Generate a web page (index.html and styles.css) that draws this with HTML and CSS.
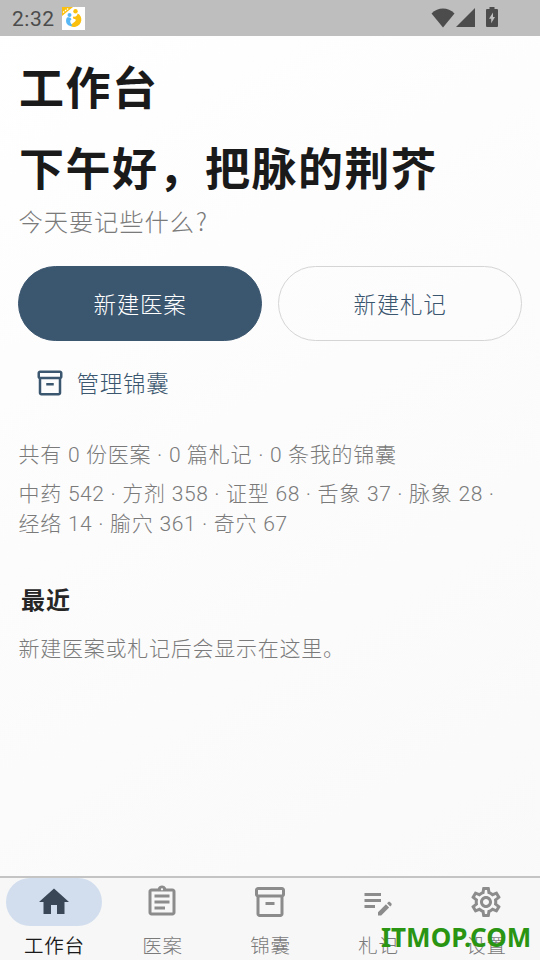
FILE: index.html
```
<!DOCTYPE html>
<html lang="zh-CN">
<head>
<meta charset="utf-8">
<title>工作台</title>
<link rel="stylesheet" href="styles.css">
</head>
<body>
<div class="app">
  <header class="status">
    <span class="clock">2:32</span>
    <svg class="app-badge" viewBox="0 0 23 23">
      <path fill="#fff" d="M0 0h23v23H0z"/>
      <path fill="#fbc00d" d="M0 0h11L0 9z"/>
      <path stroke="#fff" stroke-width="1.300" stroke-dasharray="1.5 1" d="M1 5.500L7 1"/>
      <circle cx="13.500" cy="4.200" r="2.200" fill="#fbc00d"/>
      <path fill="#fbc00d" d="M15.500 6.500c5.500 2 5.500 12-2.500 13.500-2 0-4-.5-5-1.500l5-4c1.500-1.500.5-3-1-2.500-1-.5-1.500-1.500-.5-2.500 2 .5 4-.5 4-3z"/>
      <circle cx="7.500" cy="8" r="2" fill="#58b8f5"/>
      <path fill="#58b8f5" d="M5 10.500c2-.5 4 0 4.500 2-2 .5-1.500 3.500 1 6-1.500 1-4 .5-5.500-1.500-1.300-2-1.300-4.500 0-6.500z"/>
    </svg>
    <div class="signals">
      <svg class="wifi" viewBox="0 0 24 20"><path d="M12 19.500.5 5.500C7-1.200 17-1.200 23.500 5.500z"/></svg>
      <svg class="cell" viewBox="0 0 19 19"><path d="M19 0v19H0z"/></svg>
      <svg class="battery" viewBox="0 0 12 20"><path fill-rule="evenodd" d="M3.500 0h5v2H11q1 0 1 1v16q0 1-1 1H1q-1 0-1-1V3q0-1 1-1h2.500zM7 5.500l-4 6.200h2.200v4.500L9 10H7z"/></svg>
    </div>
  </header>

  <main class="content">
    <h1 class="title">工作台</h1>
    <h2 class="greeting">下午好，把脉的荆芥</h2>
    <p class="prompt">今天要记些什么<span class="mark">?</span></p>
    <div class="actions">
      <button class="btn primary">新建医案</button>
      <button class="btn outline">新建札记</button>
    </div>
    <button class="manage">
      <svg viewBox="0 0 24 24"><path d="M20 2H4c-1 0-2 .9-2 2v3.010c0 .72.43 1.340 1 1.690V20c0 1.100 1.100 2 2 2h14c.9 0 2-.9 2-2V8.700c.57-.35 1-.97 1-1.690V4c0-1.100-1-2-2-2zm-1 18H5V9h14v11zm1-13H4V4h16v3zM9 12h6v2H9z"/></svg>
      <span>管理锦囊</span>
    </button>
    <p class="totals">共有 <b>0</b> 份医案 · <b>0</b> 篇札记 · <b>0</b> 条我的锦囊</p>
    <p class="library">中药 <b>542</b> · 方剂 <b>358</b> · 证型 <b>68</b> · 舌象 <b>37</b> · 脉象 <b>28</b> ·<br>经络 <b>14</b> · 腧穴 <b>361</b> · 奇穴 <b>67</b></p>
    <h3 class="recent">最近</h3>
    <p class="empty">新建医案或札记后会显示在这里。</p>
  </main>

  <nav class="tabs">
    <a class="tab active">
      <span class="pill"><svg viewBox="0 0 24 24"><path d="M10 20v-6h4v6h5v-8h3L12 3 2 12h3v8z"/></svg></span>
      <span class="label">工作台</span>
    </a>
    <a class="tab">
      <span class="pill"><svg viewBox="0 0 24 24"><path d="M7 15h7v2H7zm0-4h10v2H7zm0-4h10v2H7zm12-4h-4.180C14.400 1.840 13.300 1 12 1s-2.400.84-2.820 2H5c-1.100 0-2 .9-2 2v14c0 1.100.9 2 2 2h14c1.100 0 2-.9 2-2V5c0-1.100-.9-2-2-2zm-7-.25c.41 0 .75.34.75.75s-.34.75-.75.75-.75-.34-.75-.75.34-.75.75-.75zM19 19H5V5h14v14z"/></svg></span>
      <span class="label">医案</span>
    </a>
    <a class="tab">
      <span class="pill"><svg viewBox="0 0 24 24"><path d="M20 2H4c-1 0-2 .9-2 2v3.010c0 .72.43 1.340 1 1.690V20c0 1.100 1.100 2 2 2h14c.9 0 2-.9 2-2V8.700c.57-.35 1-.97 1-1.690V4c0-1.100-1-2-2-2zm-1 18H5V9h14v11zm1-13H4V4h16v3zM9 12h6v2H9z"/></svg></span>
      <span class="label">锦囊</span>
    </a>
    <a class="tab">
      <span class="pill"><svg viewBox="0 0 24 24"><path d="M3 10h11v2H3v-2zm0-2h11V6H3v2zm0 8h7v-2H3v2zm15.010-3.130.71-.71c.39-.39 1.020-.39 1.410 0l.71.71c.39.39.39 1.020 0 1.410l-.71.71-2.120-2.120zm-.71.71-5.300 5.300V21h2.120l5.300-5.300-2.120-2.120z"/></svg></span>
      <span class="label">札记</span>
    </a>
    <a class="tab">
      <span class="pill"><svg viewBox="0 0 24 24"><path d="M19.430 12.980c.04-.32.07-.64.07-.98 0-.34-.03-.66-.07-.98l2.110-1.650c.19-.15.24-.42.12-.64l-2-3.460c-.09-.16-.26-.25-.44-.25-.06 0-.12.01-.17.03l-2.490 1c-.52-.4-1.080-.73-1.690-.98l-.38-2.650C14.460 2.180 14.250 2 14 2h-4c-.25 0-.46.18-.49.42l-.38 2.650c-.61.25-1.170.59-1.690.98l-2.490-1c-.06-.02-.12-.03-.18-.03-.17 0-.34.09-.43.25l-2 3.460c-.13.22-.07.49.12.64l2.110 1.650c-.04.32-.07.65-.07.98 0 .33.03.66.07.98l-2.110 1.650c-.19.15-.24.42-.12.64l2 3.460c.09.16.26.25.44.25.06 0 .12-.01.17-.03l2.490-1c.52.4 1.080.73 1.690.98l.38 2.650c.03.24.24.42.49.42h4c.25 0 .46-.18.49-.42l.38-2.650c.61-.25 1.170-.59 1.690-.98l2.490 1c.06.02.12.03.18.03.17 0 .34-.09.43-.25l2-3.460c.12-.22.07-.49-.12-.64l-2.110-1.650zm-1.980-1.710c.04.31.05.52.05.73 0 .21-.02.43-.05.73l-.14 1.130.89.7 1.080.84-.7 1.210-1.270-.51-1.040-.42-.9.68c-.43.32-.84.56-1.250.73l-1.060.43-.16 1.130-.2 1.350h-1.400l-.19-1.350-.16-1.130-1.060-.43c-.43-.18-.83-.41-1.230-.71l-.91-.7-1.060.43-1.270.51-.7-1.210 1.080-.84.89-.7-.14-1.130c-.03-.31-.05-.54-.05-.74s.02-.43.05-.73l.14-1.130-.89-.7-1.080-.84.7-1.210 1.270.51 1.040.42.9-.68c.43-.32.84-.56 1.250-.73l1.060-.43.16-1.130.2-1.350h1.390l.19 1.350.16 1.130 1.060.43c.43.18.83.41 1.230.71l.91.7 1.060-.43 1.270-.51.7 1.210-1.070.85-.89.7.14 1.130zM12 8c-2.210 0-4 1.790-4 4s1.790 4 4 4 4-1.790 4-4-1.790-4-4-4zm0 6c-1.100 0-2-.9-2-2s.9-2 2-2 2 .9 2 2-.9 2-2 2z"/></svg></span>
      <span class="label">设置</span>
    </a>
  </nav>
  <div class="watermark">ITMOP.COM</div>
</div>
</body>
</html>
```
FILE: styles.css
```
* { box-sizing: border-box; }
body { margin: 0; }
h1, h2, h3, p { margin: 0; white-space: nowrap; }
button { font: inherit; border: 0; background: none; padding: 0; }

.app {
  position: relative;
  width: 540px;
  height: 960px;
  display: flex;
  flex-direction: column;
  overflow: hidden;
  background: linear-gradient(150deg, #fff 0%, #fcfcfc 45%, #f9f9f9 100%);
  font-family: Roboto, "Noto Sans CJK SC", sans-serif;
  font-weight: 300;
  color: #7a7a7a;
}

.status {
  height: 36px;
  flex: none;
  display: flex;
  align-items: center;
  padding: 1px 42px 0 12px;
  background: #bebebe;
  color: #4c4c4c;
}
.clock { font-size: 21px; font-weight: 400; letter-spacing: .5px; width: 50px; }
.app-badge { width: 23px; height: 23px; }
.signals { margin-left: auto; display: flex; align-items: center; fill: #4c4c4c; }
.wifi { width: 24px; height: 20px; margin: -2px 1px 0 0; }
.cell { width: 19px; height: 19px; margin: -2px 11px 0 0; }
.battery { width: 12px; height: 20px; margin-top: -4px; }

.content { flex: 1; padding: 21px 18px 0; }
.title, .greeting {
  font-size: 45px;
  line-height: 66px;
  font-weight: 700;
  letter-spacing: 1.5px;
  padding-left: 1px;
  color: #1a1a1a;
}
.greeting { margin-top: 15px; }
.prompt {
  font-size: 24.3px;
  line-height: 36px;
  height: 36px;
  letter-spacing: .9px;
  margin-top: 1px;
  padding-left: .5px;
}
.mark { font-family: "Noto Sans CJK SC", sans-serif; line-height: 1; padding-left: 1px; }

.actions { display: flex; gap: 16px; margin-top: 25px; }
.btn {
  flex: 1 1 0;
  height: 75px;
  border: 1.5px solid #3b566f;
  border-radius: 38px;
  font-size: 22.5px;
  letter-spacing: .75px;
  padding: 0 0 2px;
}
.primary { background: #3b566f; color: #fff; }
.outline { border-color: #d5d5d5; color: #3b566f; }

.manage {
  display: flex;
  align-items: center;
  gap: 12px;
  height: 60px;
  margin: 12px 0 0 16.5px;
  color: #3b566f;
  font-size: 22.5px;
  letter-spacing: .75px;
}
.manage svg { width: 30px; height: 30px; fill: currentColor; }
.manage span { margin-top: -2px; }

.totals, .library, .empty { font-size: 21px; line-height: 30px; letter-spacing: .75px; padding-left: .5px; }
.totals b, .library b { font-weight: 350; letter-spacing: .6px; }
.totals { margin-top: 27px; }
.library { margin-top: 9px; }
.recent {
  margin: 44px 0 0 3px;
  font-size: 24px;
  line-height: 36px;
  font-weight: 700;
  letter-spacing: .9px;
  color: #262626;
}
.empty { margin-top: 15px; }

.tabs {
  height: 84px;
  flex: none;
  display: flex;
  border-top: 2px solid #c4c4c4;
  background: #f7f7f7;
}
.tab { flex: 1; display: flex; flex-direction: column; align-items: center; }
.pill {
  width: 96px;
  height: 48px;
  flex: none;
  border-radius: 24px;
  display: flex;
  align-items: center;
  justify-content: center;
}
.pill svg { width: 36px; height: 36px; fill: #8c8c8c; }
.active .pill { background: #d2deee; }
.active .pill svg { fill: #394757; }
.label { font-size: 19.5px; line-height: 28px; letter-spacing: .75px; margin-top: 7px; padding-left: 1px; }
.active .label { color: #1a1a1a; font-family: Roboto, "Noto Sans CJK SC DemiLight", "Noto Sans CJK SC", sans-serif; font-weight: 400; }

.watermark {
  position: absolute;
  left: 381px;
  top: 920px;
  font: 700 26px/34px "Noto Sans", sans-serif;
  color: #2a9413;
}
```
